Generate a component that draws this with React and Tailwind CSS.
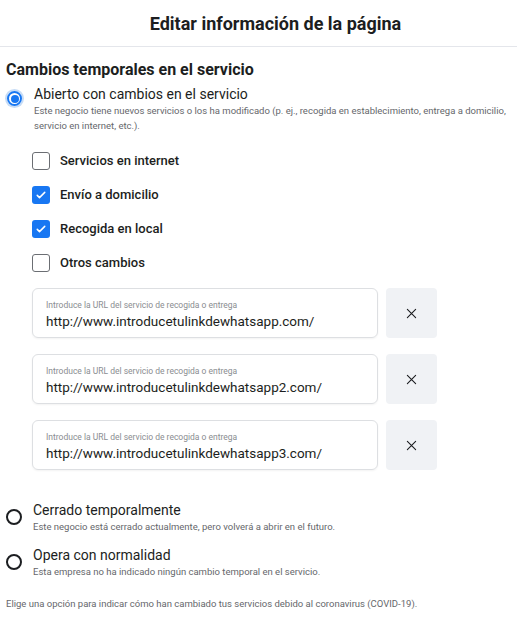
import React, { useState } from "react";

const font = { fontFamily: 'Roboto, "Noto Sans", sans-serif' };

const Radio = ({ checked }) =>
  checked ? (
    <span className="flex h-[15px] w-[15px] shrink-0 items-center justify-center rounded-full border-2 border-[#1877f2] shadow-[0_0_0_2px_#c7dcf5]">
      <span className="block h-[8px] w-[8px] rounded-full bg-[#1877f2]" />
    </span>
  ) : (
    <span className="block h-[16px] w-[16px] shrink-0 rounded-full border-2 border-[#1c1e21]" />
  );

const Checkbox = ({ checked }) =>
  checked ? (
    <span className="flex h-[18px] w-[18px] shrink-0 items-center justify-center rounded-[3px] bg-[#1877f2]">
      <svg viewBox="0 0 16 16" className="h-[12px] w-[12px]" fill="none" stroke="white" strokeWidth="2" strokeLinecap="round" strokeLinejoin="round">
        <path d="M3 8.5l3 3 7-7" />
      </svg>
    </span>
  ) : (
    <span className="block h-[18px] w-[18px] shrink-0 rounded-[3px] border-[1.5px] border-[#6b6e73]" />
  );

export default function App() {
  const [checks] = useState([
    { label: "Servicios en internet", on: false },
    { label: "Envío a domicilio", on: true },
    { label: "Recogida en local", on: true },
    { label: "Otros cambios", on: false },
  ]);
  const urls = [
    "http://www.introducetulinkdewhatsapp.com/",
    "http://www.introducetulinkdewhatsapp2.com/",
    "http://www.introducetulinkdewhatsapp3.com/",
  ];

  return (
    <div className="h-[618px] w-[517px] bg-white text-[#1c1e21]" style={font}>
      {/* Header */}
      <div className="flex h-[47px] items-center justify-center border-b border-[#e4e6eb]">
        <h1 className="pl-[34px] text-[18px] font-bold">Editar información de la página</h1>
      </div>

      <div className="px-[6px] pt-[12px]">
        <h2 className="text-[16px] font-bold leading-[22px]">Cambios temporales en el servicio</h2>

        {/* Open with changes */}
        <div className="mt-[3px] flex gap-[12px] pl-[1px]">
          <div className="pt-[7px]">
            <Radio checked />
          </div>
          <div>
            <div className="text-[14px] leading-[20px]">Abierto con cambios en el servicio</div>
            <p className="-mt-[1px] text-[9.5px] leading-[15px] text-[#65676b]">
              Este negocio tiene nuevos servicios o los ha modificado (p. ej., recogida en establecimiento, entrega a domicilio, servicio en internet, etc.).
            </p>
          </div>
        </div>

        <div className="mt-[19px] flex flex-col gap-[16px] pl-[26px]">
          {checks.map((c) => (
            <label key={c.label} className="flex h-[18px] items-center gap-[10px]">
              <Checkbox checked={c.on} />
              <span className="text-[13px] font-medium">{c.label}</span>
            </label>
          ))}
        </div>

        <div className="mt-[16px] flex flex-col gap-[16px] pl-[26px]">
          {urls.map((u) => (
            <div key={u} className="flex gap-[8px]">
              <div className="flex h-[50px] w-[346px] flex-col rounded-[6px] border border-[#dddfe2] px-[13px] pt-[10px] shadow-[0_1px_2px_rgba(0,0,0,0.05)]">
                <span className="text-[8.5px] leading-[12px] text-[#8a8d91]">Introduce la URL del servicio de recogida o entrega</span>
                <span className="mt-[1px] text-[13.5px] leading-[19px]">{u}</span>
              </div>
              <button className="flex h-[50px] w-[51px] items-center justify-center rounded-[4px] bg-[#f0f2f5]">
                <svg viewBox="0 0 16 16" className="h-[11px] w-[11px]" fill="none" stroke="#1c1e21" strokeWidth="1.6" strokeLinecap="round">
                  <path d="M2 2l12 12M14 2L2 14" />
                </svg>
              </button>
            </div>
          ))}
        </div>

        {/* Other options */}
        <div className="mt-[30px] flex gap-[11px]">
          <div className="pt-[9px]">
            <Radio />
          </div>
          <div>
            <div className="text-[14px] leading-[20px]">Cerrado temporalmente</div>
            <p className="text-[9.5px] leading-[14px] text-[#65676b]">
              Este negocio está cerrado actualmente, pero volverá a abrir en el futuro.
            </p>
          </div>
        </div>

        <div className="mt-[11px] flex gap-[11px]">
          <div className="pt-[9px]">
            <Radio />
          </div>
          <div>
            <div className="text-[14px] leading-[20px]">Opera con normalidad</div>
            <p className="text-[9.5px] leading-[14px] text-[#65676b]">
              Esta empresa no ha indicado ningún cambio temporal en el servicio.
            </p>
          </div>
        </div>

        <p className="mt-[18px] text-[9.5px] leading-[14px] text-[#65676b]">
          Elige una opción para indicar cómo han cambiado tus servicios debido al coronavirus (COVID-19).
        </p>
      </div>
    </div>
  );
}
